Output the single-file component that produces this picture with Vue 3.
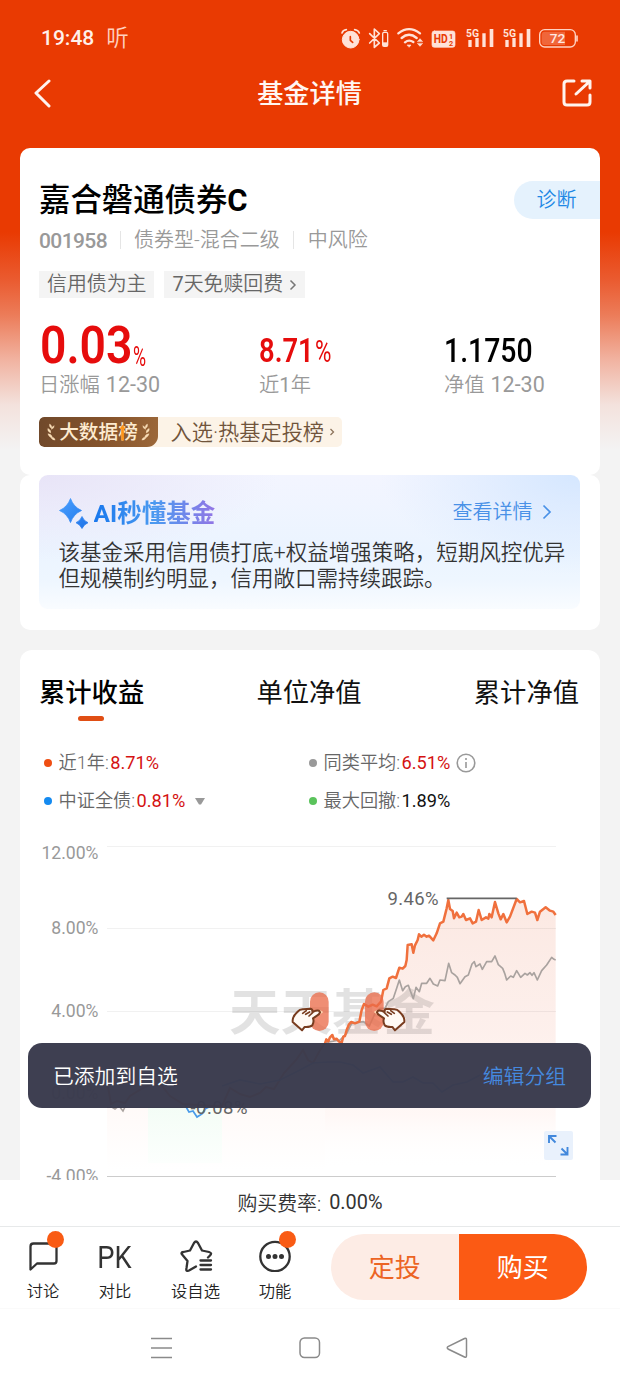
<script setup>
const tabs = ['累计收益', '单位净值', '累计净值']

const legends = [
  { name: '近1年:', value: '8.71%', dot: 'orange', tone: 'up' },
  { name: '同类平均:', value: '6.51%', dot: 'gray', tone: 'up', info: true },
  { name: '中证全债:', value: '0.81%', dot: 'blue', tone: 'up', caret: true },
  { name: '最大回撤:', value: '1.89%', dot: 'green', tone: 'plain' }
]

const grid = [
  { y: 846.5, label: '12.00%', ty: 859 },
  { y: 928.5, label: '8.00%', ty: 934 },
  { y: 1011.5, label: '4.00%', ty: 1016.5 },
  { y: 1094.5, label: '0.00%', ty: 1099 }
]

const fund =
  '135,610 139,598 145,604 150,592 157,585 162,598 170,596 176,604 185,608 190,590 195,588 200,570 207,553 214,546 225,550 238,545 245,510 252,492 265,500 278,494 290,499 303,485 310,450 320,445 328,415 338,410 348,414 358,383 368,386 376,378 380,360 383,315 395,313 400,338 405,316 413,300 417,283 424,290 432,284 440,290 447,287 460,301 470,280 480,250 490,245 500,205 505,180 510,207 518,213 522,235 530,218 538,232 545,230 550,222 558,240 570,235 578,250 588,245 596,210 605,240 618,232 625,236 628,222 635,232 645,186 655,220 662,238 670,222 680,247 690,230 710,177 720,187 732,183 742,222 755,215 765,218 772,240 780,215 797,202 810,212 820,215 827,225'

const peers =
  '135,608 180,600 200,580 215,550 250,545 268,558 285,520 300,505 315,505 325,485 340,475 350,445 358,420 368,452 376,440 385,436 393,458 400,476 408,442 418,455 425,430 440,430 450,415 460,432 473,438 480,420 495,422 506,370 515,398 525,405 532,412 540,431 555,410 565,405 576,372 583,365 588,380 600,372 607,388 620,365 635,365 645,348 655,374 668,385 674,400 680,420 692,408 700,412 710,392 722,412 735,400 742,405 750,398 756,406 762,398 772,420 785,392 800,375 815,352 822,358 827,360'

const fundEarly =
  '108,1087 111,1104 117,1101 125,1103 130,1096 143,1088 152,1084 162,1086 170,1096 183,1104 213,1106 222,1106 230,1088 240,1094 250,1097 260,1093 266,1087 274,1089 284,1073 296,1060 303,1050 308,1060 313,1063 319,1052 325,1043'

const benchmark =
  '222,1086 240,1080 260,1084 280,1080 300,1070 313,1063 328,1062 340,1062 353,1065 363,1073 380,1067 393,1082 403,1082 413,1077 423,1083 433,1083 442,1092 453,1085 467,1082 480,1075'
</script>

<template>
  <div class="screen">
    <div class="status">
      <div class="status-left"><span class="clock">19:48</span><span class="listen">听</span></div>
      <svg class="status-icons" viewBox="93 75 714 72">
        <g fill="none" stroke="#ffe2d8" stroke-linecap="round" stroke-linejoin="round">
          <path d="M96 96 Q99 87 109 86 M134 86 Q144 87 148 96" stroke-width="5" />
          <circle cx="122" cy="116" r="25" fill="#ffe2d8" stroke-width="3" />
          <path d="M121 107 V118 L128 124" stroke="#e93a02" stroke-width="5" />
          <path d="M179 98 L208 126 L193 139 V84 L208 98 L179 126" stroke-width="5" />
          <rect x="218" y="94" width="15" height="42" rx="4" stroke-width="4" />
          <path d="M222 89 H229" stroke-width="4" />
          <path d="M219 124 H232 V135 H219Z" fill="#ffe2d8" stroke="none" />
          <path d="M265 97 Q297 72 330 97 M275 111 Q297 92 320 111 M285 124 Q297 114 310 123" stroke-width="7" />
          <path d="M292 132 L303 132 L298 138Z M323 121 L330 113 L337 121Z M323 128 L330 136 L337 128Z" fill="#ffe2d8" stroke-width="2" />
          <rect x="366" y="90" width="69" height="49" rx="7" fill="#ffe2d8" stroke-width="2" />
        </g>
        <text x="371" y="126" class="hd" textLength="42" lengthAdjust="spacingAndGlyphs">HD</text>
        <text x="417" y="113" class="hd-sub">1</text>
        <text x="417" y="134" class="hd-sub">2</text>
        <g v-for="dx in [0, 111]" :key="dx" :transform="`translate(${dx} 0)`">
          <text x="468" y="107" class="net" textLength="39" lengthAdjust="spacingAndGlyphs">5G</text>
          <path d="M475 117 H485 V138 H475Z M496 111 H506 V138 H496Z M517 97 H527 V138 H517Z M539 84 H550 V138 H539Z" fill="#ffe2d8" />
        </g>
        <rect x="689" y="86" width="107" height="52" rx="15" fill="none" stroke="#ffd2c2" stroke-width="4" />
        <path d="M704 92 H765 V132 H704 Q695 132 695 122 V102 Q695 92 704 92Z" fill="#f0663a" />
        <path d="M801 105 V120" stroke="#ffd2c2" stroke-width="5" stroke-linecap="round" />
        <text x="719" y="127" class="batt">72</text>
      </svg>
    </div>

    <div class="navbar">
      <svg class="back" viewBox="0 0 20 30"><path d="M16 3 L3 15 L16 28" /></svg>
      <h1>基金详情</h1>
      <svg class="share" viewBox="0 0 30 30">
        <path d="M12 3 H5 Q2 3 2 6 V24 Q2 27 5 27 H25 Q28 27 28 24 V17" />
        <path d="M20 3 H28 V10 M27 4 L14 16" />
      </svg>
    </div>

    <section class="card summary">
      <div class="title-row">
        <h2>嘉合磐通债券<b>C</b></h2>
        <div class="diagnose">诊断</div>
      </div>
      <div class="meta">
        <span class="code">001958</span><i></i><span>债券型-混合二级</span><i></i><span>中风险</span>
      </div>
      <div class="tags">
        <span class="tag">信用债为主</span>
        <span class="tag"><b>7</b>天免赎回费<svg viewBox="0 0 8 12"><path d="M1.5 1.5 L6 6 L1.5 10.5" /></svg></span>
      </div>
      <div class="stats">
        <div class="stat first">
          <div class="num red"><span class="big">0.03</span><span class="pct small">%</span></div>
          <div class="label">日涨幅 <span>12-30</span></div>
        </div>
        <div class="stat second">
          <div class="num red"><span class="mid">8.71</span><span class="pct">%</span></div>
          <div class="label">近<b>1</b>年</div>
        </div>
        <div class="stat">
          <div class="num"><span class="mid nav-value">1.1750</span></div>
          <div class="label">净值 <span>12-30</span></div>
        </div>
      </div>
      <div class="rank">
        <div class="rank-badge">
          <svg viewBox="0 0 10 20"><path d="M3 1 Q6 3 5 6 Q2 4 3 1Z M1 6 Q5 8 4 11 Q0 9 1 6Z M1 12 Q5 12 6 16 Q2 16 1 12Z M4 16 Q8 15 9 19 Q6 19 4 16Z M8 3 Q8 6 5 7 Q5 4 8 3Z" /></svg>
          <span>大数据榜</span>
          <svg class="flip" viewBox="0 0 10 20"><path d="M3 1 Q6 3 5 6 Q2 4 3 1Z M1 6 Q5 8 4 11 Q0 9 1 6Z M1 12 Q5 12 6 16 Q2 16 1 12Z M4 16 Q8 15 9 19 Q6 19 4 16Z M8 3 Q8 6 5 7 Q5 4 8 3Z" /></svg>
          <svg class="rocket" viewBox="0 0 8 18"><path d="M4 0 L7.500 5 H5.500 V18 H2.500 V5 H.5Z" /></svg>
        </div>
        <span class="rank-text">入选·热基定投榜</span>
        <svg class="rank-arrow" viewBox="0 0 6 8"><path d="M1.500 1 L4.500 4 L1.500 7" /></svg>
      </div>
    </section>

    <section class="card ai">
      <div class="ai-panel">
        <div class="ai-head">
          <svg class="sparkle" viewBox="0 0 30 32">
            <defs><linearGradient id="spark" x1="0" y1="0" x2="1" y2="1"><stop offset="0" stop-color="#4aa0ff" /><stop offset="1" stop-color="#1f74e8" /></linearGradient></defs>
            <path d="M11.500 1.500 Q14.500 10 22.500 13.500 Q14.500 17 11.500 25.500 Q8.500 17 .5 13.500 Q8.500 10 11.500 1.500Z M23 19.500 Q24.800 24 29 25.700 Q24.800 27.400 23 31.500 Q21.200 27.400 17 25.700 Q21.200 24 23 19.500Z" fill="url(#spark)" stroke="url(#spark)" stroke-width=".8" stroke-linejoin="round" />
          </svg>
          <span class="ai-title">AI秒懂基金</span>
          <span class="more">查看详情</span>
          <svg class="more-arrow" viewBox="0 0 10 16"><path d="M1.500 1.500 L8 8 L1.500 14.500" /></svg>
        </div>
        <p>该基金采用信用债打底+权益增强策略，短期风控优异<br />但规模制约明显，信用敞口需持续跟踪。</p>
      </div>
    </section>

    <section class="card perf">
      <div class="tabs">
        <div v-for="(t, i) in tabs" :key="t" class="tab" :class="{ active: i === 0 }">{{ t }}</div>
      </div>
      <div class="legend">
        <div v-for="l in legends" :key="l.name" class="legend-item">
          <i :class="l.dot"></i><span class="l-name">{{ l.name }}</span><span :class="l.tone">{{ l.value }}</span>
          <svg v-if="l.info" class="info" viewBox="0 0 20 20"><circle cx="10" cy="10" r="8.800" /><path d="M10 9 V15 M10 5 V7" /></svg>
          <svg v-if="l.caret" class="caret" viewBox="0 0 10 7"><path d="M0 0 H10 L6 6.500 H4Z" /></svg>
        </div>
      </div>
      <svg class="chart" viewBox="20 840 580 340">
        <defs>
          <linearGradient id="area" gradientUnits="userSpaceOnUse" x1="0" y1="165" x2="0" y2="990">
            <stop offset="0" stop-color="#fbe6df" stop-opacity=".9" />
            <stop offset=".5" stop-color="#fdeeea" stop-opacity=".9" />
            <stop offset=".8" stop-color="#fff7f5" stop-opacity=".9" />
            <stop offset="1" stop-color="#fff" stop-opacity="0" />
          </linearGradient>
          <linearGradient id="earlyArea" x1="0" y1="0" x2="0" y2="1">
            <stop offset="0" stop-color="#fff8f6" /><stop offset="1" stop-color="#fff" />
          </linearGradient>
          <linearGradient id="greenArea" x1="0" y1="0" x2="0" y2="1">
            <stop offset="0" stop-color="#effbf2" /><stop offset="1" stop-color="#fcfffd" />
          </linearGradient>
        </defs>
        <g transform="translate(280 840) scale(.33333)">
          <polygon :points="`${fund} 827,990 135,990`" fill="url(#area)" />
        </g>
        <g v-for="g in grid" :key="g.label">
          <path :d="`M107 ${g.y} H556`" stroke="#000" stroke-opacity=".055" />
          <text x="98.500" :y="g.ty" text-anchor="end" class="axis">{{ g.label }}</text>
        </g>
        <path d="M107 1176.500 H556" stroke="#ccc" />
        <text x="98.500" y="1181.500" text-anchor="end" class="axis">-4.00%</text>
        <text x="229" y="1030" class="watermark" textLength="206" lengthAdjust="spacingAndGlyphs">天天基金</text>
        <path d="M107 1085 H325 V1170 H107Z" fill="url(#earlyArea)" />
        <path d="M148 1075 H222 V1163 H148Z" fill="url(#greenArea)" />
        <polyline :points="fundEarly" fill="none" stroke="#f0703d" stroke-width="2" />
        <polyline :points="benchmark" fill="none" stroke="#4a9be8" stroke-width="1.700" />
        <g transform="translate(280 840) scale(.33333)" fill="none" stroke-linejoin="round">
          <polyline :points="peers" stroke="#a9a29f" stroke-width="5" />
          <polyline :points="fund" stroke="#f0703d" stroke-width="7.500" />
          <path d="M500 175 H710" stroke="#666" stroke-width="5" />
        </g>
        <text x="387.500" y="904.500" class="peak" textLength="51">9.46%</text>
        <path d="M107 1107.500 H183" stroke="#777" />
        <path d="M110 1106 L115 1109 L119 1106 L123 1111 L126 1105" fill="none" stroke="#a9a29f" stroke-width="1.500" />
        <path d="M185 1105 L189 1112 L193 1111 L197 1117 L202 1114 L205 1109 L211 1106" fill="none" stroke="#4a9be8" stroke-width="1.700" />
        <text x="190.500" y="1114" class="peak" textLength="57">-0.08%</text>
        <g transform="translate(280 840) scale(.33333)">
          <g v-for="m in ['', 'translate(411 0) scale(-1 1)']" :key="m" :transform="m">
            <rect :x="m ? 100 : 90" y="457" width="56" height="116" rx="28" fill="#ea6a48" fill-opacity=".76" />
            <path d="M119 509 L130 516 L119 524Z" fill="#ffd4b0" />
            <path d="M38 540 Q39 528 52 516 Q60 507 70 508 L91 506 Q99 508 97 516 L108 512 Q119 510 120 517 Q118 523 111 527 L99 535 Q103 545 97 556 Q91 562 74 561 L66 571 L38 546Z" fill="#fffaf5" stroke="#783c1f" stroke-width="6" stroke-linejoin="round" />
            <path d="M68 520 L79 512 M77 523 L89 516 M87 528 L98 518" fill="none" stroke="#783c1f" stroke-width="5" stroke-linecap="round" />
          </g>
        </g>
        <rect x="544" y="1131" width="29" height="29" rx="2" fill="#e9f1fc" />
        <path d="M549 1143 V1136 H556.500 M549.500 1136.500 L555.500 1142.500 M560.500 1154.500 H567.500 V1147 M567 1154 L561.500 1148.500" fill="none" stroke="#4288dc" stroke-width="1.900" />
      </svg>
    </section>

    <div class="toast"><span>已添加到自选</span><a>编辑分组</a></div>

    <footer>
      <div class="fee"><span>购买费率:</span><b>0.00%</b></div>
      <div class="actions">
        <div class="act a1">
          <svg viewBox="0 0 34 34"><path d="M4.500 32.500 V9.500 Q4.500 6.500 7.500 6.500 H28 Q30.500 6.500 30.500 9.500 V24 Q30.500 26.500 28 26.500 H11Z" /></svg>
          <em></em><span>讨论</span>
        </div>
        <div class="act a2"><div class="pk">PK</div><span>对比</span></div>
        <div class="act a3">
          <svg viewBox="0 0 34 34"><path d="M17 29.500 L10 33.500 Q6.500 35 7.500 31 L8.500 24 L3.500 18 Q1 15.500 4.500 15 L11 13.500 L15 6 Q17 3 19 6 L23 13.500 L30 15 Q33.500 16 31 18.500 L29 20.500" /><path d="M21.500 23.500 H32 M21.500 28 H32 M21.500 32.500 H32" /></svg>
          <span>设自选</span>
        </div>
        <div class="act a4">
          <svg viewBox="0 0 34 34"><circle cx="17" cy="19.500" r="14.700" /><path class="dots" d="M10.500 19.500 h.01 M17 19.500 h.01 M23.500 19.500 h.01" /></svg>
          <em></em><span>功能</span>
        </div>
        <div class="buttons"><div class="plan">定投</div><div class="buy">购买</div></div>
      </div>
      <div class="sysnav">
        <svg viewBox="0 0 22 22"><path d="M0 1.500 H21 M0 11 H21 M0 20.500 H21" /></svg>
        <svg viewBox="0 0 22 22"><rect x="1" y="1" width="19.500" height="19.500" rx="4.500" /></svg>
        <svg viewBox="0 0 22 22"><path d="M18.500 1.500 Q20.500 .5 20.500 3 V18.500 Q20.500 21 18.500 20 L2 12 Q.5 10.800 2 9.700Z" /></svg>
      </div>
    </footer>
  </div>
</template>

<style>
body { margin: 0; background: #f3f3f3; }
</style>

<style scoped>
* { box-sizing: border-box; }
.screen {
  position: relative; width: 620px; height: 1386px; overflow: hidden;
  display: flex; flex-direction: column;
  font-family: Roboto, "Noto Sans CJK SC", sans-serif; color: #111;
  background: linear-gradient(180deg, #e93a02 0, #e93a02 232px, #ea5b30 280px, #ec7c59 315px, #f1b3a1 360px, #f3e2dd 405px, #f3f3f3 450px);
}
h1, h2, p, b { margin: 0; font-weight: 400; }
svg { display: block; flex: none; }
.status { height: 76px; padding: 0 41px; display: flex; align-items: center; justify-content: space-between; color: #fff0ea; }
.status-left { display: flex; align-items: center; gap: 12px; line-height: 24px; }
.clock { font-size: 21px; font-weight: 500; }
.listen { font-size: 22.500px; font-weight: 350; color: #ffd0bf; }
.status-icons { width: 238px; height: 24px; }
.hd { font: 700 37px Roboto, sans-serif; fill: #e93a02; }
.hd-sub { font: 700 22px Roboto, sans-serif; fill: #e93a02; }
.net { font: 700 34px Roboto, sans-serif; fill: #ffe2d8; }
.batt { font: 500 41px Roboto, sans-serif; fill: #ffe9e2; }
.navbar { height: 34px; padding: 0 28px 0 32px; display: flex; align-items: center; justify-content: space-between; }
.back { width: 20px; height: 30px; }
.share { width: 30px; height: 30px; }
.back path, .share path { fill: none; stroke: #fff3ee; stroke-width: 3; stroke-linecap: round; stroke-linejoin: round; }
.navbar h1 { font-size: 26.200px; line-height: 34px; font-weight: 500; color: #fff6f2; margin-left: 5px; padding-top: 1px; }
.card { margin: 0 20.500px 0 19.500px; background: #fff; border-radius: 10px; flex: none; }
.summary { margin-top: 38px; height: 327px; padding: 32px 0 0 19.500px; }
.title-row { display: flex; justify-content: space-between; align-items: flex-start; height: 42px; }
h2 { font-size: 31.400px; line-height: 40px; font-weight: 500; color: #000; padding-top: 1px; }
h2 b { font-weight: 700; font-size: 31px; }
.diagnose { width: 86px; height: 38px; margin-top: 1px; padding-left: 23px; background: #e5f2fd; border-radius: 19px 0 0 19px; font-size: 20px; line-height: 39px; color: #1e88e5; font-weight: 350; }
.back { margin-left: 1px; margin-right: -1px; }
.meta { display: flex; align-items: center; height: 36px; font-size: 20px; line-height: 24px; font-weight: 350; color: #999; }
.meta i { width: 1px; height: 18px; background: #e5e5e5; margin: 0 14px 0 13px; }
.meta .code + i { margin-right: 13px; }
.code { font-size: 21px; font-weight: 500; letter-spacing: -.6px; padding-top: 1px; }
.tags { display: flex; gap: 10px; margin-top: 13px; height: 27px; }
.tag { display: flex; align-items: center; padding: 0 8px; background: #f4f4f4; color: #666; font-size: 19.900px; line-height: 28px; font-weight: 350; }
.tag svg { width: 8px; height: 12px; margin-left: 6px; }
.tag path { fill: none; stroke: #777; stroke-width: 1.500; }
.stats { display: flex; margin-top: 20px; height: 80px; }
.stat { width: 130px; }
.stat.first { width: 220px; }
.stat.second { width: 185px; }
.num { height: 53px; display: flex; align-items: flex-end; color: #000; }
.num.red { color: #e60c0c; }
.big { width: 93px; margin-left: .5px; font-size: 52px; line-height: 52px; height: 51px; font-weight: 600; transform: scaleX(.89); transform-origin: left; }
.mid { width: 56px; font-size: 33px; line-height: 36px; height: 38px; font-weight: 600; transform: scaleX(.83); transform-origin: left; }
.nav-value { width: 90px; font-weight: 500; transform: scaleX(.86); }
.pct { width: 16px; font-size: 32px; line-height: 36px; height: 38px; font-weight: 400; transform: scaleX(.7); transform-origin: left; }
.pct.small { font-size: 27px; line-height: 30px; height: 29px; transform: scaleX(.66); }
.label { font-size: 20.300px; line-height: 28px; font-weight: 350; color: #999; white-space: nowrap; }
.label span { font-size: 21.500px; font-weight: 400; margin-left: 1px; }
.rank { display: flex; align-items: center; width: 303px; height: 30px; margin-top: 19px; background: #fcf3e7; border-radius: 5px; overflow: hidden; }
.rank-badge { position: relative; width: 119px; height: 30px; display: flex; align-items: center; justify-content: center; gap: 3px; border-radius: 5px 0 11px 5px; background: linear-gradient(100deg, #70492b, #85532b 55%, #9c683a); color: #fdebd0; font-size: 19.700px; line-height: 31px; font-weight: 500; }
.rank-badge svg { width: 9px; height: 20px; fill: #f8dcb5; stroke: #f8dcb5; stroke-width: .5; }
.rank-badge .flip { transform: scaleX(-1); }
.rank-badge .rocket { position: absolute; left: 80px; top: 7px; width: 7px; height: 17px; fill: #ff9518; stroke: none; }
.rank-text { margin-left: 12.500px; font-size: 21.200px; line-height: 32px; padding-top: 1px; color: #70543b; font-weight: 350; }
.rank-arrow { width: 6px; height: 8px; margin-left: 5px; }
.rank-arrow path { fill: none; stroke: #8d745c; stroke-width: 1.300; }
.ai { height: 155px; padding: 0 20px 0 19px; }
.ai-panel { height: 134px; border-radius: 9px; padding: 20px 14px 0 20px; background: radial-gradient(ellipse 200px 100px at 100% 0, #d5e7ff 0, rgba(228, 241, 255, 0) 100%), radial-gradient(ellipse 240px 85px at 0 0, #e8e4f7 0, rgba(238, 236, 252, 0) 100%), linear-gradient(180deg, #f3f5ff 0, #ebf4ff 55%, #eef6ff 78%, #f9fcff 100%); }
.ai-head { display: flex; align-items: center; height: 34px; }
.sparkle { width: 30px; height: 32px; margin: 2px 5px 0 0; }
.ai-title { font-size: 24.500px; line-height: 34px; padding-top: 3px; font-weight: 700; background: linear-gradient(90deg, #1978ed, #4b9af0 50%, #9275e5); background-clip: text; -webkit-background-clip: text; color: transparent; }
.more { margin-left: auto; font-size: 20px; line-height: 32px; color: #4991e7; font-weight: 350; }
.more-arrow { width: 10px; height: 16px; margin: 0 14px 0 9px; }
.more-arrow path { fill: none; stroke: #4991e7; stroke-width: 1.700; }
.ai-panel p { font-size: 21.500px; line-height: 25.500px; margin-top: 11px; color: #333; font-weight: 350; white-space: nowrap; }
.perf { height: 560px; margin-top: 20px; border-radius: 12px 12px 0 0; }
.tabs { display: flex; justify-content: space-between; padding: 23px 20.500px 0 19.500px; height: 94px; font-size: 26.300px; line-height: 40px; color: #111; }
.tab { position: relative; height: 40px; }
.tab.active { font-weight: 500; color: #000; }
.tab.active::after { content: ""; position: absolute; left: 39px; bottom: -8px; width: 26px; height: 5px; border-radius: 3px; background: #e04e14; }
.legend { display: grid; grid-template-columns: 265px 1fr; grid-auto-rows: 38px; padding-left: 24px; height: 96px; font-size: 18px; }
.legend-item { display: flex; align-items: center; font-size: 18.200px; line-height: 24px; }
.legend-item i { width: 8px; height: 8px; border-radius: 50%; margin-right: 7px; }
.orange { background: #ef4e13; }
.gray { background: #999; }
.blue { background: #148af0; }
.green { background: #5ac35b; }
.l-name { color: #666; font-weight: 350; margin-right: 1.500px; }
.up { color: #d51212; }
.plain { color: #111; }
.info { width: 20px; height: 20px; margin-left: 6px; }
.info * { fill: none; stroke: #999; stroke-width: 1.600; }
.caret { width: 10px; height: 7px; margin-left: 10px; fill: #999; }
.chart { width: 580px; height: 340px; margin-left: .5px; }
.axis { font: 400 17.600px Roboto, sans-serif; fill: #999; }
.peak { font: 400 18.500px Roboto, sans-serif; fill: #666; }
.watermark { font: 700 49px "Noto Sans CJK SC", sans-serif; fill: #000; fill-opacity: .115; }
.toast { position: absolute; left: 28px; top: 1043px; width: 563px; height: 64.500px; padding: 0 25px; display: flex; align-items: center; justify-content: space-between; border-radius: 14px; background: rgba(57, 58, 77, .975); font-size: 20.800px; font-weight: 350; color: #fff; }
.toast a { color: #4589df; }
footer { position: absolute; left: 0; right: 0; bottom: 0; height: 206px; background: #fff; }
.fee { height: 47px; border-bottom: 1px solid #e7e9ea; display: flex; align-items: center; justify-content: center; gap: 8px; font-size: 19.900px; font-weight: 350; color: #333; padding-bottom: 1px; }
.actions { height: 82px; display: flex; border-bottom: 1px solid #fafafa; }
.act { position: relative; display: flex; flex-direction: column; align-items: center; font-size: 16.300px; line-height: 24px; color: #222; font-weight: 350; padding-top: 9px; }
.act svg { width: 34px; height: 36px; margin-bottom: 8px; }
.act svg * { fill: none; stroke: #333; stroke-width: 2.300; stroke-linejoin: round; stroke-linecap: round; }
.act svg .dots { stroke-width: 5; }
.act em { position: absolute; top: 4px; width: 17px; height: 17px; border-radius: 50%; background: #f95b14; }
.a1 { width: 86px; }
.a1 em { left: 47px; }
.a2 { width: 58px; }
.a3 { width: 103px; }
.a4 { width: 56px; }
.a4 em { left: 32px; }
.pk { height: 44px; font-size: 31px; line-height: 43px; font-weight: 400; transform: scaleX(.88); color: #333; }
.buttons { display: flex; width: 256px; height: 66px; margin: 7px 0 0 28px; border-radius: 33px; overflow: hidden; font-size: 26px; line-height: 68px; text-align: center; }
.plan { width: 127.500px; background: #fdece5; color: #ec6423; }
.buy { flex: 1; background: #fb5a14; color: #fff; }
.sysnav { height: 77px; display: flex; justify-content: space-between; align-items: center; padding: 0 152px 0 151px; }
.sysnav svg { width: 22px; height: 22px; }
.sysnav svg * { fill: none; stroke: #8a8a8a; stroke-width: 1.500; }
</style>
